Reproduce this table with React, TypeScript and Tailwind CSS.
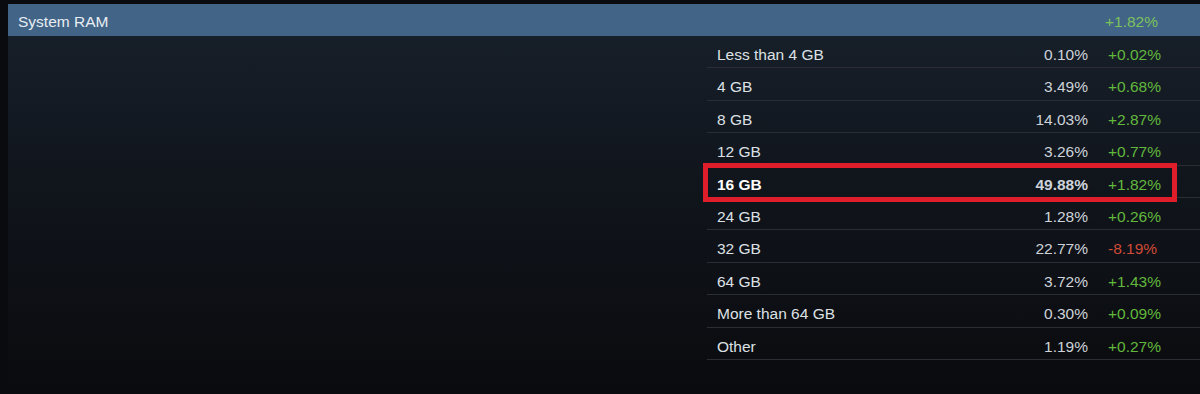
import { clsx as cn } from 'clsx';

type Row = {
  label: string;
  share: string;
  change: string;
  highlight?: boolean;
};

const ROWS: Row[] = [
  { label: 'Less than 4 GB', share: '0.10%', change: '+0.02%' },
  { label: '4 GB', share: '3.49%', change: '+0.68%' },
  { label: '8 GB', share: '14.03%', change: '+2.87%' },
  { label: '12 GB', share: '3.26%', change: '+0.77%' },
  { label: '16 GB', share: '49.88%', change: '+1.82%', highlight: true },
  { label: '24 GB', share: '1.28%', change: '+0.26%' },
  { label: '32 GB', share: '22.77%', change: '-8.19%' },
  { label: '64 GB', share: '3.72%', change: '+1.43%' },
  { label: 'More than 64 GB', share: '0.30%', change: '+0.09%' },
  { label: 'Other', share: '1.19%', change: '+0.27%' },
];

function StatRow({ row }: { row: Row }) {
  const negative = row.change.startsWith('-');
  return (
    <div
      className={cn(
        'relative flex h-[32.4px] items-start border-b border-[#2a2e34] pl-[10px] pt-[10px] leading-[18px]',
        row.highlight && 'font-bold text-white'
      )}
    >
      <span className="flex-1">{row.label}</span>
      <span className="text-right text-[#cdd3d9]">{row.share}</span>
      <span
        className={cn(
          'ml-[20px] w-[92px] font-normal',
          negative ? 'text-[#cf4a37]' : 'text-[#62b83c]'
        )}
      >
        {row.change}
      </span>
      {/* red annotation box drawn over the row */}
      {row.highlight && (
        <div className="pointer-events-none absolute -left-[4px] -top-[3px] right-[23px] -bottom-[5px] border-[5px] border-[#e01e2b]" />
      )}
    </div>
  );
}

export default function App() {
  return (
    <div
      className="h-[394px] w-[1200px] overflow-hidden bg-[#0a0b0e] pl-2 pt-[4px] text-[15.5px] text-[#dde1e5]"
      style={{ fontFamily: '"Liberation Sans", Arial, sans-serif' }}
    >
      <div className="flex h-full flex-col bg-gradient-to-b from-[#18212c] via-[#10141b] to-[#0a0b0e]">
        <div className="flex h-8 shrink-0 items-center bg-[#426487] pt-[3px]">
          <span className="flex-1 pl-[10px] text-[#e8eef3]">System RAM</span>
          <span className="w-[95px] text-[#7cc25c]">+1.82%</span>
        </div>
        <div className="ml-[699px] flex flex-col">
          {ROWS.map((row) => (
            <StatRow key={row.label} row={row} />
          ))}
        </div>
      </div>
    </div>
  );
}
